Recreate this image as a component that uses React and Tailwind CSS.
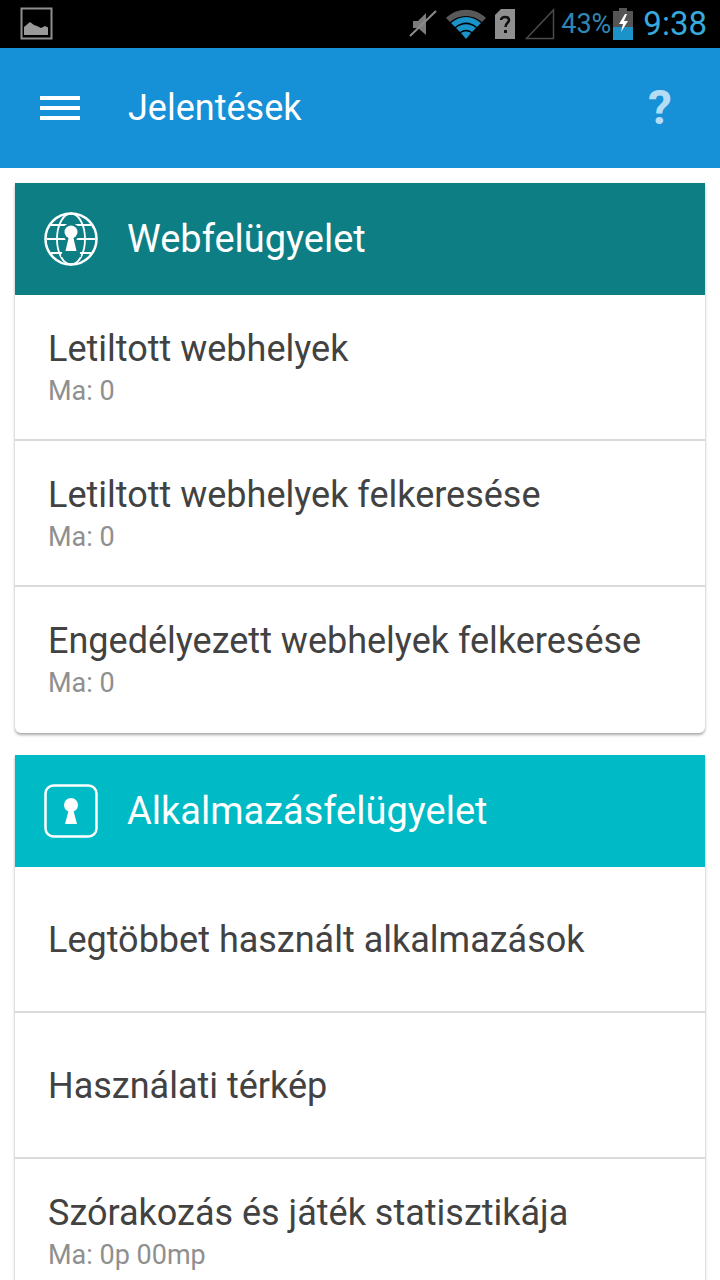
const webRows = [
  { title: "Letiltott webhelyek", sub: "Ma: 0" },
  { title: "Letiltott webhelyek felkeresése", sub: "Ma: 0" },
  { title: "Engedélyezett webhelyek felkeresése", sub: "Ma: 0" },
];

const appRows = [
  { title: "Legtöbbet használt alkalmazások" },
  { title: "Használati térkép" },
  { title: "Szórakozás és játék statisztikája", sub: "Ma: 0p 00mp" },
];

function PictureIcon() {
  return (
    <svg width="34" height="34" viewBox="0 0 34 34">
      <rect x="1.5" y="1.5" width="30" height="30" fill="none" stroke="#8f8f8f" strokeWidth="2" />
      <path d="M4 28V20L10 15L14 18L17 19L21 21L25 19L28 20.5L28 28Z" fill="#9a9a9a" />
    </svg>
  );
}

function MuteIcon() {
  return (
    <svg width="28" height="30" viewBox="0 0 28 30">
      <path d="M4 12H9L17 4V26L9 19H4Z" fill="#7c7c7c" />
      <path d="M1 27L27 2" stroke="#8c8c8c" strokeWidth="2" />
    </svg>
  );
}

function WifiIcon() {
  return (
    <svg width="42" height="32" viewBox="0 0 42 32">
      <path d="M1 10C12 -1 30 -1 41 10L37 14C28 6 14 6 5 14Z" fill="#595959" />
      <path d="M6 15C15 7 27 7 36 15L32 19C25 13 17 13 10 19Z" fill="#1b93c9" />
      <path d="M11 20C17 15 25 15 31 20L27 24C23 21 19 21 15 24Z" fill="#1b93c9" />
      <path d="M16 25C19 23 23 23 26 25L21 31Z" fill="#1b93c9" />
    </svg>
  );
}

function SimIcon() {
  return (
    <svg width="20" height="30" viewBox="0 0 20 30">
      <path d="M0 6L6 0H20V30H0Z" fill="#8f8f8f" />
      <path d="M6 11C6 7 14 7 14 11C14 14 10.500 14 10.500 18" fill="none" stroke="#111" strokeWidth="2.6" />
      <rect x="9" y="21" width="3" height="3" fill="#111" />
    </svg>
  );
}

function SignalIcon() {
  return (
    <svg width="30" height="32" viewBox="0 0 30 32">
      <path d="M1.500 30.500L28.500 2V30.500Z" fill="none" stroke="#4a4a4a" strokeWidth="1.500" />
    </svg>
  );
}

function BatteryIcon() {
  return (
    <svg width="20" height="32" viewBox="0 0 20 32">
      <rect x="6" y="0" width="8" height="3" fill="#555" />
      <rect x="0" y="3" width="20" height="16" fill="#555" />
      <rect x="0" y="19" width="20" height="13" fill="#1b93c9" />
      <path d="M12 6L6 16H10L8 24L15 13H11L14 6Z" fill="#fff" />
    </svg>
  );
}

function GlobeKeyIcon() {
  return (
    <svg width="54" height="54" viewBox="0 0 54 54" fill="none" stroke="#fff">
      <circle cx="27" cy="27" r="25.500" strokeWidth="2.500" />
      <ellipse cx="27" cy="27" rx="14" ry="25.500" strokeWidth="1.800" />
      <path d="M3 27H51M7 13H47M7 41H47" strokeWidth="1.800" />
      <circle cx="27" cy="20" r="9" fill="#0e7e85" stroke="none" />
      <path d="M17 45L22 25H32L37 45Z" fill="#0e7e85" stroke="none" />
      <circle cx="27" cy="20" r="6.500" fill="#fff" stroke="none" />
      <path d="M25 24H29L32.500 39H21.500Z" fill="#fff" stroke="none" />
    </svg>
  );
}

function AppKeyIcon() {
  return (
    <svg width="54" height="54" viewBox="0 0 54 54">
      <rect x="1.500" y="1.500" width="51" height="51" rx="8" fill="none" stroke="#fff" strokeWidth="2.500" />
      <circle cx="27" cy="21" r="7" fill="#fff" />
      <path d="M25 25H29L33 40H21Z" fill="#fff" />
    </svg>
  );
}

function Row({ title, sub, last }) {
  return (
    <div className={`h-[146px] pl-[33px] flex flex-col ${last ? "" : "border-b-2 border-[#d9d9d9]"}`}>
      {sub ? (
        <>
          <div className="mt-[31px] text-[36px] leading-[46px] text-[#424242]">{title}</div>
          <div className="mt-[1px] text-[27px] leading-[36px] text-[#8f8f8f]">{sub}</div>
        </>
      ) : (
        <div className="mt-[50px] text-[36px] leading-[46px] text-[#424242]">{title}</div>
      )}
    </div>
  );
}

function Card({ color, icon, title, rows }) {
  return (
    <div className="mx-[15px] bg-white rounded-b-[6px] shadow-[0_2px_3px_rgba(0,0,0,0.35)]">
      <div className={`h-[112px] flex items-center pl-[29px] ${color}`}>
        {icon}
        <div className="ml-[29px] text-[38px] text-white">{title}</div>
      </div>
      {rows.map((row, i) => (
        <Row key={row.title} title={row.title} sub={row.sub} last={i === rows.length - 1} />
      ))}
    </div>
  );
}

export default function App() {
  return (
    <div className="w-[720px] h-[1280px] overflow-hidden bg-white font-['Roboto',sans-serif]">
      {/* Status bar */}
      <div className="h-[48px] bg-black flex items-center pl-[20px] pr-[13px]">
        <PictureIcon />
        <div className="ml-auto flex items-center">
          <MuteIcon />
          <div className="ml-[8px]"><WifiIcon /></div>
          <div className="ml-[8px]"><SimIcon /></div>
          <div className="ml-[10px]"><SignalIcon /></div>
          <span className="ml-[6px] text-[27px] text-[#2f86b5]">43%</span>
          <div className="ml-[2px]"><BatteryIcon /></div>
          <span className="ml-[10px] text-[33px] text-[#38a9dc]">9:38</span>
        </div>
      </div>

      {/* App bar */}
      <div className="h-[120px] bg-[#1690d7] flex items-center pl-[40px] pr-[48px]">
        <div className="w-[40px] flex flex-col gap-[6px]">
          <div className="h-[4px] bg-white" />
          <div className="h-[4px] bg-white" />
          <div className="h-[4px] bg-white" />
        </div>
        <div className="ml-[48px] text-[36px] text-white">Jelentések</div>
        <div className="ml-auto text-[48px] font-bold text-[#b5dcf5] leading-none">?</div>
      </div>

      <div className="pt-[15px] flex flex-col gap-[22px]">
        <Card color="bg-[#0e7e85]" icon={<GlobeKeyIcon />} title="Webfelügyelet" rows={webRows} />
        <Card color="bg-[#00bac6]" icon={<AppKeyIcon />} title="Alkalmazásfelügyelet" rows={appRows} />
      </div>
    </div>
  );
}
